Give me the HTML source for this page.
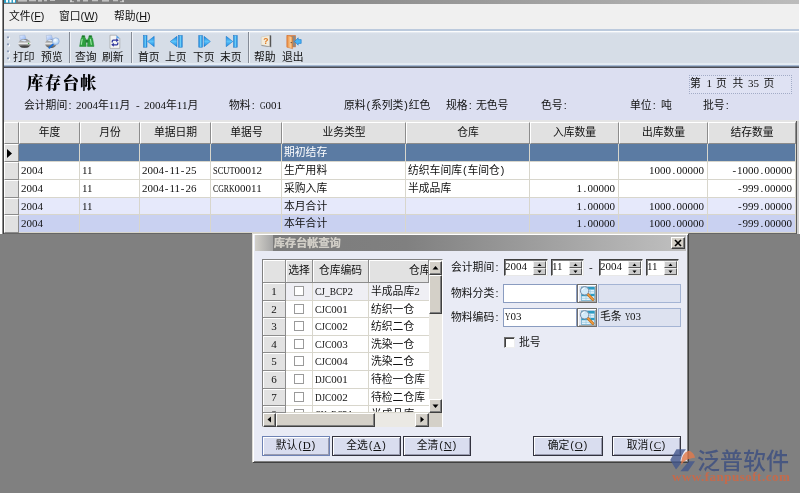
<!DOCTYPE html>
<html lang="zh-CN">
<head>
<meta charset="utf-8">
<title>库存台帐</title>
<style>
*{box-sizing:border-box;margin:0;padding:0}
html,body{width:800px;height:493px;overflow:hidden;background:#808080}
body{position:relative;font-family:"Liberation Sans","Noto Sans CJK SC",sans-serif;font-size:10.8px;color:#111;line-height:12px}
#root{position:absolute;left:0;top:0;width:800px;height:493px;will-change:transform}
.abs{position:absolute}
.t{position:absolute;white-space:nowrap;line-height:12px;height:12px}
.n{font-family:"Liberation Serif","Noto Sans CJK SC",serif;font-size:11px}
.p{display:inline-block;width:5.4px;text-align:center}
.mo{display:inline-block;font-family:"Liberation Serif","Noto Sans CJK SC",serif;font-size:11px;white-space:nowrap;vertical-align:baseline}
.mi{display:inline-block;transform-origin:0 50%}
#frameL{left:0;top:0;width:2px;height:234px;background:#fff}
#frameL2{left:2px;top:0;width:2px;height:234px;background:linear-gradient(90deg,#8c8c8c 50%,#3e3e3e 50%)}
#frameR{left:799px;top:0;width:1px;height:234px;background:#fff}
#titlebar{left:4px;top:0;width:795px;height:4px;background:linear-gradient(90deg,#777,#8a8a8a 40%,#bcbcbc)}
#appicon{left:4px;top:0;width:12px;height:3px;background:#2f9ec4}
#menubar{left:4px;top:4px;width:795px;height:25px;background:#f0f0f0}
#toolbar{left:4px;top:29px;width:795px;height:38px;background:linear-gradient(#bccadd 0,#bccadd 2px,#fbfcfd 2px,#fbfcfd 3px,#eaeef4 3px,#d8dfe9 4.5px,#d6dde7 6px,#d6dde7 33.5px,#e4ebf3 34px,#e4ebf3 36px,#a5b8d2 36px,#a5b8d2 37px,#6c7a90 37px,#6c7a90 38px)}
.sep{position:absolute;top:32px;width:1px;height:31px;background:#858b96;box-shadow:1px 0 0 #eef1f6}
.tb{position:absolute;top:51px}
#panel{left:4px;top:67px;width:795px;height:53px;background:#dcdff1;border-top:1px solid #4b4b52}
#gridbg{left:4px;top:120px;width:795px;height:114px;background:#e4e4e4;border-bottom:1px solid #666}
#title{left:27px;top:74.5px;font-family:"Liberation Serif","Noto Serif CJK SC",serif;font-weight:900;font-size:16.5px;letter-spacing:1.2px;line-height:18px;height:18px;color:#000}
.pl{top:98.5px}
#pagebox{left:689px;top:75px;width:103px;height:19px;border:1px dotted #a2abc6;background:#dfe2f3}
.hc{position:absolute;top:122px;height:22px;background:#e1e1e1;border-left:1px solid #fff;border-top:1px solid #fff;border-right:1px solid #8c8c8c;border-bottom:1px solid #8c8c8c;text-align:center;line-height:19px;white-space:nowrap;overflow:hidden}
.ind{position:absolute;left:4px;width:15px;height:18px;background:#e1e1e1;border-left:1px solid #fff;border-top:1px solid #fff;border-right:1px solid #8c8c8c;border-bottom:1px solid #8c8c8c}
.row{position:absolute;left:19px;width:777px;height:18px}
.c{position:absolute;top:0;height:18px;border-right:1px solid #d8d6cc;border-bottom:1px solid #d8d6cc;line-height:17px;white-space:nowrap;overflow:hidden;padding:0 2px}
.r{text-align:right;padding-right:3px}
#dlg{left:252px;top:233px;width:437px;height:230px;background:#e9ebf5;border:1px solid;border-color:#dcdad4 #404040 #404040 #dcdad4;box-shadow:inset 1px 1px 0 #fff,inset -1px -1px 0 #808080}
#dtitle{left:255px;top:235px;width:431px;height:16px;background:linear-gradient(90deg,#d2d0ca 0,#a4a4a4 18px,#7c7c7c 18.5px,#808080 35%,#c0c0c0 100%)}
#dtt{left:273.5px;top:237px;color:#d0cdc6;font-weight:bold;font-size:11.2px;text-shadow:.4px 0 0 #d0cdc6;overflow:hidden;width:70px;line-height:13px;height:13px}
#dclose{left:671px;top:237px;width:14px;height:12px;background:#d4d0c8;border:1px solid;border-color:#fff #404040 #404040 #fff;box-shadow:inset -1px -1px 0 #808080}
#lst{left:262px;top:259px;width:181px;height:168px;background:#fff;border:1px solid;border-color:#808080 #fff #fff #808080;box-shadow:inset 1px 1px 0 #404040}
.lh{position:absolute;background:#e2e2e2;border-right:1px solid #8c8c8c;border-bottom:1px solid #8c8c8c;box-shadow:inset 1px 1px 0 #fff;text-align:center;white-space:nowrap;overflow:hidden}
.lc{position:absolute;background:#fff;border-right:1px solid #d8d6cc;border-bottom:1px solid #d8d6cc;white-space:nowrap;overflow:hidden;line-height:16px;padding-left:2px}
.cb{position:absolute;width:10px;height:10px;background:#fff;border:1px solid #9a9a9a}
.sb{position:absolute;background:#d4d0c8;border:1px solid;border-color:#fff #404040 #404040 #fff;box-shadow:inset -1px -1px 0 #808080}
.btn{position:absolute;height:20px;background:#d9ddef;border:1px solid #33333f;box-shadow:inset 1px 1px 0 #fff,inset -1px -1px 0 #9a9cb0;text-align:center;line-height:17px;white-space:nowrap}
.fld{position:absolute;background:#fff;border:1px solid #8a9cc0;height:19px;line-height:14px;padding-left:1px;white-space:nowrap;overflow:hidden}
.ro{background:#dde2f0;border-color:#a4b4d4}
.spin{position:absolute;top:259px;height:17px;background:#fff;border:1px solid;border-color:#404040 #e8e8e8 #e8e8e8 #404040;box-shadow:inset 1px 1px 0 #808080;line-height:12px;padding-left:0;white-space:nowrap;overflow:hidden}
.spb{position:absolute;width:13px;height:7px;background:#cbcbcb;border:1px solid;border-color:#f0f0f0 #5a5a5a #5a5a5a #f0f0f0}
</style>
</head>
<body>
<div id="root">
<div id="frameL" class="abs"></div><div id="frameL2" class="abs"></div><div id="frameR" class="abs"></div>
<div id="titlebar" class="abs"></div>
<div id="appicon" class="abs"></div>
<svg class="abs" style="left:4px;top:0" width="130" height="4"><g fill="#fff"><rect x="2" y="0" width="2" height="2.500"/><rect x="5.500" y="0" width="2" height="2.500"/><rect x="9" y="0" width="2" height="2.500"/></g><g fill="#d8d8d8" fill-opacity=".75"><rect x="14" y="0" width="9" height="1.600"/><rect x="25" y="0" width="7" height="1.300"/><rect x="34" y="0" width="4" height="1.600"/><rect x="40" y="0" width="3" height="1.300"/><rect x="46" y="0" width="5" height="1"/><rect x="66" y="0" width="2" height="2"/><rect x="66" y="1.200" width="4" height="1"/><rect x="73" y="0" width="3" height="1.500"/><rect x="79" y="0" width="5" height="1.500"/><rect x="88" y="0" width="6" height="1.300"/><rect x="98" y="0" width="7" height="1.600"/><rect x="109" y="0" width="5" height="1.300"/><rect x="118" y="0" width="2" height="2"/><rect x="116" y="1.200" width="4" height="1"/></g></svg>
<div id="menubar" class="abs"></div>
<div class="t" style="left:9px;top:10px">文件(<u>F</u>)</div>
<div class="t" style="left:59px;top:10px">窗口(<u>W</u>)</div>
<div class="t" style="left:114px;top:10px">帮助(<u>H</u>)</div>
<div id="toolbar" class="abs"></div>
<div class="sep" style="left:69px"></div>
<div class="sep" style="left:131px"></div>
<div class="sep" style="left:248px"></div>
<div class="t tb" style="left:13px">打印</div>
<div class="t tb" style="left:41px">预览</div>
<div class="t tb" style="left:75px">查询</div>
<div class="t tb" style="left:102px">刷新</div>
<div class="t tb" style="left:138px">首页</div>
<div class="t tb" style="left:165px">上页</div>
<div class="t tb" style="left:193px">下页</div>
<div class="t tb" style="left:220px">末页</div>
<div class="t tb" style="left:254px">帮助</div>
<div class="t tb" style="left:282px">退出</div>
<svg class="abs" style="left:0;top:30px" width="320" height="24" viewBox="0 30 320 24">
<defs>
<linearGradient id="gp" x1="0" y1="0" x2="0" y2="1"><stop offset="0" stop-color="#7e7e7e"/><stop offset=".32" stop-color="#b4b4b4"/><stop offset=".5" stop-color="#f0f0f0"/><stop offset=".64" stop-color="#8c8c8c"/><stop offset="1" stop-color="#4c4c4c"/></linearGradient>
<linearGradient id="gpa" x1="0" y1="0" x2="1" y2="1"><stop offset="0" stop-color="#e8f0ff"/><stop offset="1" stop-color="#7fa8f0"/></linearGradient>
<linearGradient id="gb" x1="0" y1="0" x2="1" y2="0"><stop offset="0" stop-color="#1580d8"/><stop offset=".5" stop-color="#6fd0fa"/><stop offset="1" stop-color="#1580d8"/></linearGradient>
<linearGradient id="gd" x1="0" y1="0" x2="1" y2="0"><stop offset="0" stop-color="#e8883a"/><stop offset=".6" stop-color="#f8c890"/><stop offset="1" stop-color="#e89040"/></linearGradient>
<linearGradient id="gt" x1="0" y1="0" x2="0" y2="1"><stop offset="0" stop-color="#1884de"/><stop offset=".5" stop-color="#5cc4fa"/><stop offset="1" stop-color="#1884de"/></linearGradient>
<radialGradient id="gm" cx=".4" cy=".35" r=".7"><stop offset="0" stop-color="#fff"/><stop offset="1" stop-color="#9cc8f4"/></radialGradient>
</defs>
<!-- print -->
<g>
<path d="M20.2 40.8L19.7 35.5L24.8 35.1L26.4 40Z" fill="url(#gpa)" stroke="#8fa4c8" stroke-width=".4"/>
<ellipse cx="24.6" cy="43.6" rx="6.4" ry="4.5" fill="url(#gp)"/>
<path d="M20.6 40.6L23 39.6L26.6 40.2L25 41.4Z" fill="#d8e6fa"/>
<ellipse cx="24.6" cy="46.4" rx="4.4" ry=".9" fill="#444"/>
<circle cx="28.6" cy="43.4" r=".7" fill="#3a9a3a"/>
</g>
<!-- preview -->
<g transform="translate(26.6 0)">
<path d="M20.2 40.8L19.7 35.5L24.8 35.1L26.4 40Z" fill="url(#gpa)" stroke="#8fa4c8" stroke-width=".4"/>
<ellipse cx="24.2" cy="43.8" rx="5.8" ry="4.2" fill="url(#gp)"/>
<path d="M20.6 40.6L23 39.6L26 40.2L24.6 41.4Z" fill="#d8e6fa"/>
<path d="M26.4 44.4L22.8 47.8" stroke="#1a6ed8" stroke-width="1.9" stroke-linecap="round"/>
<circle cx="29.2" cy="41.2" r="3.4" fill="url(#gm)" stroke="#8aa6d8" stroke-width=".7"/>
</g>
<!-- binoculars -->
<g fill="#2fa040" stroke="#1f8230" stroke-width=".5">
<path d="M82 35.7h2.7l.3 2.2.6.4.6 8.1h-6.6l1.5-8.1.6-.4z"/>
<path d="M89 35.7h2.7l.3 2.2.6.4 1.4 8.1h-6.6l.7-8.1.6-.4z"/>
</g>
<rect x="85.4" y="39.6" width="2.8" height="3" fill="#1f8230"/>
<path d="M82.2 39.2l-.9 5.2M90.4 39.2l.9 5.2" stroke="#9be8a4" stroke-width="1.1" stroke-linecap="round"/>
<path d="M82.2 36.3h2.3M89.2 36.3h2.3" stroke="#176a24" stroke-width="1"/>
<!-- refresh -->
<path d="M110 35.2h6.4l3.4 3.4v9.8H110z" fill="#f4f4f4" stroke="#a0a0a0" stroke-width=".7"/>
<path d="M116.4 35.2l3.4 3.4h-3.4z" fill="#5aa0e8"/>
<path d="M111.6 42.4v-1.2q0-1.6 1.6-1.6h3v-1.4l2.6 2-2.6 2v-1.4h-2.8q-.5 0-.5.5v1.1z" fill="#2f359c"/>
<path d="M118.4 42.6v1.2q0 1.6-1.6 1.6h-3v1.4l-2.6-2 2.6-2v1.4h2.8q.5 0 .5-.5v-1.1z" fill="#2f359c"/>
<!-- first -->
<rect x="143.6" y="35.6" width="3.4" height="11.6" fill="url(#gb)" stroke="#1272c8" stroke-width=".5"/>
<path d="M154.200 36.300v10.400l-6.600-5.200z" fill="url(#gt)" stroke="#1272c8" stroke-width=".5"/>
<!-- prev -->
<path d="M177 36.300v10.400l-6.800-5.200z" fill="url(#gt)" stroke="#1272c8" stroke-width=".5"/>
<rect x="178.6" y="35.6" width="3.6" height="11.6" fill="url(#gb)" stroke="#1272c8" stroke-width=".5"/>
<!-- next -->
<rect x="198.8" y="35.6" width="3.6" height="11.6" fill="url(#gb)" stroke="#1272c8" stroke-width=".5"/>
<path d="M204 36.300v10.400l6.400-5.200z" fill="url(#gt)" stroke="#1272c8" stroke-width=".5"/>
<!-- last -->
<path d="M226.200 36.300v10.400l6.600-5.200z" fill="url(#gt)" stroke="#1272c8" stroke-width=".5"/>
<rect x="233.6" y="35.6" width="3.6" height="11.6" fill="url(#gb)" stroke="#1272c8" stroke-width=".5"/>
<!-- help -->
<path d="M261.2 37l8.6-1.6v11l-8.6-1.4z" fill="#f3ecdc" stroke="#c8c0b0" stroke-width=".5"/>
<path d="M269.8 35.2l1.4.4v11.6l-1.4-.8z" fill="#555"/>
<path d="M261.2 45l8.6 1.4 1.4.8-9.4-1.2z" fill="#8a8a8a"/>
<text x="263.2" y="44.2" font-family="Liberation Sans,sans-serif" font-weight="bold" font-size="8.5" fill="#e07a20">?</text>
<!-- exit -->
<path d="M286.6 35.2h9.2v12h-9.2z" fill="#d8783a"/>
<path d="M291.4 36h4v10.6h-4z" fill="#8a8a8a"/>
<path d="M287 35.4l5.6 1.4v12l-5.6-1.6z" fill="url(#gd)" stroke="#d07030" stroke-width=".4"/>
<circle cx="291.2" cy="42.6" r=".6" fill="#333"/>
<path d="M301.2 39.6v3.8h-3v1.8l-3.6-3.7 3.6-3.7v1.8z" fill="#48b4f4" stroke="#1a78d0" stroke-width=".6"/>
</svg>
<svg class="abs" style="left:6px;top:35px" width="5" height="27">
<g fill="#fff"><circle cx="2.8" cy="3.2" r="1.2"/><circle cx="2.8" cy="10.2" r="1.2"/><circle cx="2.8" cy="17.2" r="1.2"/><circle cx="2.8" cy="24.2" r="1.2"/></g>
<g fill="#8c9cb8"><circle cx="2" cy="2.4" r="1.1"/><circle cx="2" cy="9.4" r="1.1"/><circle cx="2" cy="16.4" r="1.1"/><circle cx="2" cy="23.4" r="1.1"/></g>
</svg>
<div id="panel" class="abs"></div>
<div id="gridbg" class="abs"></div>
<div id="title" class="t">库存台帐</div>
<div class="t pl" style="left:24px">会计期间<span class="p">:</span></div>
<div class="t pl" style="left:76px"><span class="n">2004</span>年<span class="n">11</span>月</div>
<div class="t pl n" style="left:136px">-</div>
<div class="t pl" style="left:144px"><span class="n">2004</span>年<span class="n">11</span>月</div>
<div class="t pl" style="left:229px">物料<span class="p">:</span></div>
<div class="t pl" style="left:260px"><span class="mo" style="width:5.4px"><span class="mi" style="transform:scaleX(0.680)">G</span></span><span class="n">001</span></div>
<div class="t pl" style="left:344px">原料<span class="p">(</span>系列类<span class="p">)</span>红色</div>
<div class="t pl" style="left:446px">规格<span class="p">:</span></div>
<div class="t pl" style="left:476px">无色号</div>
<div class="t pl" style="left:541px">色号<span class="p">:</span></div>
<div class="t pl" style="left:630px">单位<span class="p">:</span></div>
<div class="t pl" style="left:661px">吨</div>
<div class="t pl" style="left:703px">批号<span class="p">:</span></div>
<div id="pagebox" class="abs"></div>
<div class="t" style="left:690px;top:77px">第</div>
<div class="t" style="left:706.5px;top:77px"><span class="n">1</span></div>
<div class="t" style="left:716px;top:77px">页</div>
<div class="t" style="left:732.5px;top:77px">共</div>
<div class="t" style="left:748px;top:77px"><span class="n">35</span></div>
<div class="t" style="left:763.5px;top:77px">页</div>
<div class="hc" style="left:4px;width:15px"></div>
<div class="hc" style="left:19px;width:61px">年度</div>
<div class="hc" style="left:80px;width:60px">月份</div>
<div class="hc" style="left:140px;width:71px">单据日期</div>
<div class="hc" style="left:211px;width:71px">单据号</div>
<div class="hc" style="left:282px;width:124px">业务类型</div>
<div class="hc" style="left:406px;width:124px">仓库</div>
<div class="hc" style="left:530px;width:89px">入库数量</div>
<div class="hc" style="left:619px;width:89px">出库数量</div>
<div class="hc" style="left:708px;width:88px">结存数量</div>
<div class="ind" style="top:144px;height:18px"></div>
<div class="row" style="top:144px;height:18px;background:#5b7ba3;color:#fff">
<div class="c n" style="left:0px;width:61px;height:18px"></div>
<div class="c n" style="left:61px;width:60px;height:18px"></div>
<div class="c n" style="left:121px;width:71px;height:18px"></div>
<div class="c n" style="left:192px;width:71px;height:18px"></div>
<div class="c" style="left:263px;width:124px;height:18px">期初结存</div>
<div class="c" style="left:387px;width:124px;height:18px"></div>
<div class="c r n" style="left:511px;width:89px;height:18px"></div>
<div class="c r n" style="left:600px;width:89px;height:18px"></div>
<div class="c r n" style="left:689px;width:88px;height:18px"></div>
</div>
<div class="ind" style="top:162px;height:18px"></div>
<div class="row" style="top:162px;height:18px;background:#fff;color:#111">
<div class="c n" style="left:0px;width:61px;height:18px">2004</div>
<div class="c n" style="left:61px;width:60px;height:18px">11</div>
<div class="c n" style="left:121px;width:71px;height:18px">2004<span class="p">-</span>11<span class="p">-</span>25</div>
<div class="c n" style="left:192px;width:71px;height:18px"><span class="mo" style="width:21.6px"><span class="mi" style="transform:scaleX(0.768)">SCUT</span></span>00012</div>
<div class="c" style="left:263px;width:124px;height:18px">生产用料</div>
<div class="c" style="left:387px;width:124px;height:18px">纺织车间库<span class="p">(</span>车间仓<span class="p">)</span></div>
<div class="c r n" style="left:511px;width:89px;height:18px"></div>
<div class="c r n" style="left:600px;width:89px;height:18px">1000<span class="p">.</span>00000</div>
<div class="c r n" style="left:689px;width:88px;height:18px"><span class="p">-</span>1000<span class="p">.</span>00000</div>
</div>
<div class="ind" style="top:180px;height:18px"></div>
<div class="row" style="top:180px;height:18px;background:#fff;color:#111">
<div class="c n" style="left:0px;width:61px;height:18px">2004</div>
<div class="c n" style="left:61px;width:60px;height:18px">11</div>
<div class="c n" style="left:121px;width:71px;height:18px">2004<span class="p">-</span>11<span class="p">-</span>26</div>
<div class="c n" style="left:192px;width:71px;height:18px"><span class="mo" style="width:21.6px"><span class="mi" style="transform:scaleX(0.707)">CGRK</span></span>00011</div>
<div class="c" style="left:263px;width:124px;height:18px">采购入库</div>
<div class="c" style="left:387px;width:124px;height:18px">半成品库</div>
<div class="c r n" style="left:511px;width:89px;height:18px">1<span class="p">.</span>00000</div>
<div class="c r n" style="left:600px;width:89px;height:18px"></div>
<div class="c r n" style="left:689px;width:88px;height:18px"><span class="p">-</span>999<span class="p">.</span>00000</div>
</div>
<div class="ind" style="top:198px;height:17px"></div>
<div class="row" style="top:198px;height:17px;background:#e6e9fb;color:#111">
<div class="c n" style="left:0px;width:61px;height:17px">2004</div>
<div class="c n" style="left:61px;width:60px;height:17px">11</div>
<div class="c n" style="left:121px;width:71px;height:17px"></div>
<div class="c n" style="left:192px;width:71px;height:17px"></div>
<div class="c" style="left:263px;width:124px;height:17px">本月合计</div>
<div class="c" style="left:387px;width:124px;height:17px"></div>
<div class="c r n" style="left:511px;width:89px;height:17px">1<span class="p">.</span>00000</div>
<div class="c r n" style="left:600px;width:89px;height:17px">1000<span class="p">.</span>00000</div>
<div class="c r n" style="left:689px;width:88px;height:17px"><span class="p">-</span>999<span class="p">.</span>00000</div>
</div>
<div class="ind" style="top:215px;height:18px"></div>
<div class="row" style="top:215px;height:18px;background:#c9d1f1;color:#111">
<div class="c n" style="left:0px;width:61px;height:18px">2004</div>
<div class="c n" style="left:61px;width:60px;height:18px"></div>
<div class="c n" style="left:121px;width:71px;height:18px"></div>
<div class="c n" style="left:192px;width:71px;height:18px"></div>
<div class="c" style="left:263px;width:124px;height:18px">本年合计</div>
<div class="c" style="left:387px;width:124px;height:18px"></div>
<div class="c r n" style="left:511px;width:89px;height:18px">1<span class="p">.</span>00000</div>
<div class="c r n" style="left:600px;width:89px;height:18px">1000<span class="p">.</span>00000</div>
<div class="c r n" style="left:689px;width:88px;height:18px"><span class="p">-</span>999<span class="p">.</span>00000</div>
</div>
<svg class="abs" style="left:7px;top:149px" width="6" height="9"><path d="M0 0L5 4.500L0 9Z" fill="#000"/></svg>
<div class="abs" style="left:796px;top:121px;width:1px;height:113px;background:#5a5a5a"></div>
<div class="abs" style="left:797px;top:121px;width:2px;height:113px;background:#d0d0d0"></div>
<div id="dlg" class="abs"></div>
<div id="dtitle" class="abs"></div>
<div id="dtt" class="t">库存台帐查询</div>
<div id="dclose" class="abs"><svg width="12" height="10" style="position:absolute;left:0;top:0"><path d="M3 2l6 6M9 2l-6 6" stroke="#000" stroke-width="1.600"/></svg></div>
<div id="lst" class="abs"></div>
<div class="lh" style="left:263px;top:260px;width:23px;height:23px;line-height:21px;"></div>
<div class="lh" style="left:286px;top:260px;width:27px;height:23px;line-height:21px;">选择</div>
<div class="lh" style="left:313px;top:260px;width:56px;height:23px;line-height:21px;">仓库编码</div>
<div class="lh" style="left:369px;top:260px;width:60px;height:23px;line-height:21px;text-align:left;padding-left:40px;">仓库</div>
<div class="lh n" style="left:263px;top:283px;width:23px;height:17.6px;line-height:17px">1</div>
<div class="lc" style="left:286px;top:283px;width:27px;height:17.6px;background:#efeff4"><div class="cb" style="left:8px;top:3px"></div></div>
<div class="lc n" style="left:313px;top:283px;width:56px;height:17.6px;background:#efeff4"><span class="mo" style="width:32.4px"><span class="mi" style="transform:scaleX(0.855)">CJ_BCP</span></span>2</div>
<div class="lc" style="left:369px;top:283px;width:60px;height:17.6px;background:#efeff4;border-right:0">半成品库<span class="n">2</span></div>
<div class="lh n" style="left:263px;top:300.6px;width:23px;height:17.6px;line-height:17px">2</div>
<div class="lc" style="left:286px;top:300.6px;width:27px;height:17.6px;background:#fff"><div class="cb" style="left:8px;top:3px"></div></div>
<div class="lc n" style="left:313px;top:300.6px;width:56px;height:17.6px;background:#fff"><span class="mo" style="width:16.2px"><span class="mi" style="transform:scaleX(0.855)">CJC</span></span>001</div>
<div class="lc" style="left:369px;top:300.6px;width:60px;height:17.6px;background:#fff;border-right:0">纺织一仓</div>
<div class="lh n" style="left:263px;top:318.2px;width:23px;height:17.6px;line-height:17px">3</div>
<div class="lc" style="left:286px;top:318.2px;width:27px;height:17.6px;background:#fff"><div class="cb" style="left:8px;top:3px"></div></div>
<div class="lc n" style="left:313px;top:318.2px;width:56px;height:17.6px;background:#fff"><span class="mo" style="width:16.2px"><span class="mi" style="transform:scaleX(0.855)">CJC</span></span>002</div>
<div class="lc" style="left:369px;top:318.2px;width:60px;height:17.6px;background:#fff;border-right:0">纺织二仓</div>
<div class="lh n" style="left:263px;top:335.8px;width:23px;height:17.6px;line-height:17px">4</div>
<div class="lc" style="left:286px;top:335.8px;width:27px;height:17.6px;background:#fff"><div class="cb" style="left:8px;top:3px"></div></div>
<div class="lc n" style="left:313px;top:335.8px;width:56px;height:17.6px;background:#fff"><span class="mo" style="width:16.2px"><span class="mi" style="transform:scaleX(0.855)">CJC</span></span>003</div>
<div class="lc" style="left:369px;top:335.8px;width:60px;height:17.6px;background:#fff;border-right:0">洗染一仓</div>
<div class="lh n" style="left:263px;top:353.4px;width:23px;height:17.6px;line-height:17px">5</div>
<div class="lc" style="left:286px;top:353.4px;width:27px;height:17.6px;background:#fff"><div class="cb" style="left:8px;top:3px"></div></div>
<div class="lc n" style="left:313px;top:353.4px;width:56px;height:17.6px;background:#fff"><span class="mo" style="width:16.2px"><span class="mi" style="transform:scaleX(0.855)">CJC</span></span>004</div>
<div class="lc" style="left:369px;top:353.4px;width:60px;height:17.6px;background:#fff;border-right:0">洗染二仓</div>
<div class="lh n" style="left:263px;top:371px;width:23px;height:17.6px;line-height:17px">6</div>
<div class="lc" style="left:286px;top:371px;width:27px;height:17.6px;background:#fff"><div class="cb" style="left:8px;top:3px"></div></div>
<div class="lc n" style="left:313px;top:371px;width:56px;height:17.6px;background:#fff"><span class="mo" style="width:16.2px"><span class="mi" style="transform:scaleX(0.828)">DJC</span></span>001</div>
<div class="lc" style="left:369px;top:371px;width:60px;height:17.6px;background:#fff;border-right:0">待检一仓库</div>
<div class="lh n" style="left:263px;top:388.6px;width:23px;height:17.6px;line-height:17px">7</div>
<div class="lc" style="left:286px;top:388.6px;width:27px;height:17.6px;background:#fff"><div class="cb" style="left:8px;top:3px"></div></div>
<div class="lc n" style="left:313px;top:388.6px;width:56px;height:17.6px;background:#fff"><span class="mo" style="width:16.2px"><span class="mi" style="transform:scaleX(0.828)">DJC</span></span>002</div>
<div class="lc" style="left:369px;top:388.6px;width:60px;height:17.6px;background:#fff;border-right:0">待检二仓库</div>
<div class="lh n" style="left:263px;top:406.2px;width:23px;height:6.8px;line-height:17px">8</div>
<div class="lc" style="left:286px;top:406.2px;width:27px;height:6.8px;background:#fff"><div class="cb" style="left:8px;top:3px"></div></div>
<div class="lc n" style="left:313px;top:406.2px;width:56px;height:6.8px;background:#fff"><span class="mo" style="width:32.4px"><span class="mi" style="transform:scaleX(0.779)">CK_BCP</span></span>1</div>
<div class="lc" style="left:369px;top:406.2px;width:60px;height:6.8px;background:#fff;border-right:0">半成品库</div>
<div class="abs" style="left:429px;top:260px;width:13px;height:153px;background:#ebe9e4"></div>
<div class="sb" style="left:429px;top:261px;width:13px;height:14px"><svg width="11" height="12" style="position:absolute;left:0;top:0"><path d="M2.500 7.500h6l-3-3.500z" fill="#000"/></svg></div>
<div class="sb" style="left:429px;top:275px;width:13px;height:39px"></div>
<div class="sb" style="left:429px;top:399px;width:13px;height:14px"><svg width="11" height="12" style="position:absolute;left:0;top:0"><path d="M2.500 4.500h6l-3 3.500z" fill="#000"/></svg></div>
<div class="abs" style="left:263px;top:413px;width:179px;height:14px;background:#ebe9e4"></div>
<div class="sb" style="left:263px;top:413px;width:13px;height:14px"><svg width="11" height="12" style="position:absolute;left:0;top:0"><path d="M7 2.500v6l-3.500-3z" fill="#000"/></svg></div>
<div class="sb" style="left:276px;top:413px;width:99px;height:14px"></div>
<div class="sb" style="left:415px;top:413px;width:14px;height:14px"><svg width="12" height="12" style="position:absolute;left:0;top:0"><path d="M4.500 2.500v6l3.500-3z" fill="#000"/></svg></div>
<div class="abs" style="left:429px;top:413px;width:13px;height:14px;background:#d4d0c8"></div>
<div class="btn" style="left:262px;top:436px;width:68px;border-color:#6e82b4">默认<span class="p">(</span><u class="n">D</u><span class="p">)</span></div>
<div class="btn" style="left:332px;top:436px;width:69px">全选<span class="p">(</span><u class="n">A</u><span class="p">)</span></div>
<div class="btn" style="left:403px;top:436px;width:68px">全清<span class="p">(</span><u class="n">N</u><span class="p">)</span></div>
<div class="btn" style="left:533px;top:436px;width:70px">确定<span class="p">(</span><u class="n">O</u><span class="p">)</span></div>
<div class="btn" style="left:612px;top:436px;width:69px">取消<span class="p">(</span><u class="n">C</u><span class="p">)</span></div>
<div class="t" style="left:451px;top:261px">会计期间<span class="p">:</span></div>
<div class="t" style="left:451px;top:287px">物料分类<span class="p">:</span></div>
<div class="t" style="left:451px;top:311px">物料编码<span class="p">:</span></div>
<div class="spin n" style="left:504px;width:44px">2004</div>
<div class="spb" style="left:533px;top:261px"><svg width="11" height="5" style="position:absolute;left:0;top:0"><path d="M3.500 4h4l-2-2.500z" fill="#000"/></svg></div>
<div class="spb" style="left:533px;top:268px"><svg width="11" height="5" style="position:absolute;left:0;top:0"><path d="M3.500 1.500h4l-2 2.500z" fill="#000"/></svg></div>
<div class="spin n" style="left:551px;width:33px">11</div>
<div class="spb" style="left:569px;top:261px"><svg width="11" height="5" style="position:absolute;left:0;top:0"><path d="M3.500 4h4l-2-2.500z" fill="#000"/></svg></div>
<div class="spb" style="left:569px;top:268px"><svg width="11" height="5" style="position:absolute;left:0;top:0"><path d="M3.500 1.500h4l-2 2.500z" fill="#000"/></svg></div>
<div class="spin n" style="left:599px;width:44px">2004</div>
<div class="spb" style="left:628px;top:261px"><svg width="11" height="5" style="position:absolute;left:0;top:0"><path d="M3.500 4h4l-2-2.500z" fill="#000"/></svg></div>
<div class="spb" style="left:628px;top:268px"><svg width="11" height="5" style="position:absolute;left:0;top:0"><path d="M3.500 1.500h4l-2 2.500z" fill="#000"/></svg></div>
<div class="spin n" style="left:646px;width:33px">11</div>
<div class="spb" style="left:664px;top:261px"><svg width="11" height="5" style="position:absolute;left:0;top:0"><path d="M3.500 4h4l-2-2.500z" fill="#000"/></svg></div>
<div class="spb" style="left:664px;top:268px"><svg width="11" height="5" style="position:absolute;left:0;top:0"><path d="M3.500 1.500h4l-2 2.500z" fill="#000"/></svg></div>
<div class="t n" style="left:589px;top:261px">-</div>
<div class="fld" style="left:503px;top:284px;width:74px"></div>
<div class="abs" style="left:577px;top:284px;width:20px;height:19px;background:#dfe3ee;border:1px solid #6e6e6e;box-shadow:inset 1px 1px 0 #fff,inset -1px -1px 0 #a8a8a8"><svg width="18" height="17" style="position:absolute;left:0;top:0"><rect x="3.500" y="2" width="13" height="13.500" fill="#e4f2fb" stroke="#4f9cc0" stroke-width=".6"/><rect x="3.500" y="2" width="13" height="2.600" fill="#2b9ac2"/><rect x="3.500" y="8.800" width="13" height="2.400" fill="#2b9ac2"/><path d="M8 4.600v11M12.300 4.600v11M3.500 6.700h13M3.500 13.300h13" stroke="#8cc4de" stroke-width=".6"/><path d="M9.800 9.200l5.200 5.400" stroke="#b86a1e" stroke-width="2.800" stroke-linecap="round"/><path d="M9.800 9.200l5.200 5.400" stroke="#f0983a" stroke-width="1.700" stroke-linecap="round"/><circle cx="6.600" cy="5.800" r="4.200" fill="#d4eafa" fill-opacity=".92" stroke="#7c8ca4" stroke-width="1"/><path d="M4.200 5a2.600 2.600 0 0 1 2.400-1.800" stroke="#fff" stroke-width=".9" fill="none"/></svg></div>
<div class="fld ro" style="left:598px;top:284px;width:83px"></div>
<div class="fld" style="left:503px;top:308px;width:74px"><span class="mo" style="width:5.4px"><span class="mi" style="transform:scaleX(0.680)">Y</span></span><span class="n">03</span></div>
<div class="abs" style="left:577px;top:308px;width:20px;height:19px;background:#dfe3ee;border:1px solid #6e6e6e;box-shadow:inset 1px 1px 0 #fff,inset -1px -1px 0 #a8a8a8"><svg width="18" height="17" style="position:absolute;left:0;top:0"><rect x="3.500" y="2" width="13" height="13.500" fill="#e4f2fb" stroke="#4f9cc0" stroke-width=".6"/><rect x="3.500" y="2" width="13" height="2.600" fill="#2b9ac2"/><rect x="3.500" y="8.800" width="13" height="2.400" fill="#2b9ac2"/><path d="M8 4.600v11M12.300 4.600v11M3.500 6.700h13M3.500 13.300h13" stroke="#8cc4de" stroke-width=".6"/><path d="M9.800 9.200l5.200 5.400" stroke="#b86a1e" stroke-width="2.800" stroke-linecap="round"/><path d="M9.800 9.200l5.200 5.400" stroke="#f0983a" stroke-width="1.700" stroke-linecap="round"/><circle cx="6.600" cy="5.800" r="4.200" fill="#d4eafa" fill-opacity=".92" stroke="#7c8ca4" stroke-width="1"/><path d="M4.200 5a2.600 2.600 0 0 1 2.400-1.800" stroke="#fff" stroke-width=".9" fill="none"/></svg></div>
<div class="fld ro" style="left:598px;top:308px;width:83px">毛条<span style="margin-left:3px"><span class="mo" style="width:5.4px"><span class="mi" style="transform:scaleX(0.680)">Y</span></span><span class="n">03</span></span></div>
<div class="abs" style="left:504px;top:337px;width:11px;height:11px;background:#fff;border:1px solid;border-color:#707070 #eee #eee #707070;box-shadow:inset 1px 1px 0 #404040"></div>
<div class="t" style="left:519px;top:336px">批号</div>
<svg class="abs" style="left:668px;top:446px" width="30" height="28" viewBox="668 446 30 28">
<path d="M676.400 449.300H686Q680.500 455 680.300 464.200L676 469.400L670.200 460Z" fill="#42568c" fill-opacity=".8"/>
<path d="M688.800 461.300H695L688 471.200H680.400Z" fill="#42568c" fill-opacity=".8"/>
<path d="M681.200 465C681 457 684 452 688.800 450.800C692 451.500 694.500 454.500 695 457.700C689 458 684 460.500 681.200 465Z" fill="#e07a4c" fill-opacity=".82"/>
</svg>
<div class="t" style="left:697px;top:448px;height:26px;line-height:26px;font-size:23px;font-weight:500;color:rgba(58,76,128,.8)">泛普软件</div>
<div class="t" style="left:672px;top:469px;height:16px;line-height:16px;font-family:'Liberation Serif',serif;font-weight:bold;font-size:13px;color:rgba(214,100,62,.78);letter-spacing:.5px">www.fanpusoft.com</div>
</div>
</body>
</html>
